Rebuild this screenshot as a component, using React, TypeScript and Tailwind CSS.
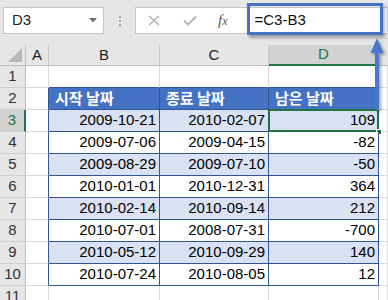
import React from "react";

const rows = [
  ["2009-10-21", "2010-02-07", "109"],
  ["2009-07-06", "2009-04-15", "-82"],
  ["2009-08-29", "2009-07-10", "-50"],
  ["2010-01-01", "2010-12-31", "364"],
  ["2010-02-14", "2010-09-14", "212"],
  ["2010-07-01", "2008-07-31", "-700"],
  ["2010-05-12", "2010-09-29", "140"],
  ["2010-07-24", "2010-08-05", "12"],
];

const font = { fontFamily: '"Liberation Sans", "Noto Sans CJK KR", sans-serif' };

function RowHead({ n, active }: { n: number; active?: boolean }) {
  return (
    <div
      className={
        "h-[22px] flex items-center justify-center border-b border-[#d0d0d0] text-[15px] " +
        (active
          ? "bg-[#d2d2d2] text-[#217346] border-r-2 border-r-[#217346]"
          : "bg-[#e6e6e6] text-[#333] border-r border-r-[#bdbdbd]")
      }
    >
      {n}
    </div>
  );
}

function Blank({ className = "" }: { className?: string }) {
  return <div className={"h-[22px] border-r border-b border-[#d9d9d9] bg-white " + className} />;
}

export default function App() {
  return (
    <div className="relative w-[388px] h-[300px] overflow-hidden bg-white" style={font}>
      {/* formula bar */}
      <div className="h-[45px] bg-[#e6e6e6] flex items-start pt-[7px]">
        <div className="ml-[3px] w-[101px] h-[27px] bg-white border border-[#c6c6c6] flex items-center pl-[8px] pr-[6px]">
          <span className="text-[15px] text-[#222] flex-1">D3</span>
          <svg width="8" height="5" viewBox="0 0 8 5">
            <path d="M0 0 L8 0 L4 4.5 Z" fill="#6f6f6f" />
          </svg>
        </div>
        <div className="w-[31px] h-[27px] flex flex-col items-center justify-center gap-[2px]">
          <span className="w-[2px] h-[2px] bg-[#a8a8a8]" />
          <span className="w-[2px] h-[2px] bg-[#a8a8a8]" />
          <span className="w-[2px] h-[2px] bg-[#a8a8a8]" />
        </div>
        <div className="flex-1 h-[27px] bg-white border border-[#c6c6c6] flex items-center">
          <svg className="ml-[12px]" width="12" height="11" viewBox="0 0 12 11">
            <path d="M1 1 L11 10 M11 1 L1 10" stroke="#b5b5b5" strokeWidth="1.6" />
          </svg>
          <svg className="ml-[23px]" width="14" height="11" viewBox="0 0 14 11">
            <path d="M1 5.5 L5 9.5 L13 1.5" stroke="#b5b5b5" strokeWidth="1.8" fill="none" />
          </svg>
          <span
            className="ml-[21px] text-[15px] italic text-[#555]"
            style={{ fontFamily: '"Liberation Serif", serif' }}
          >
            f<span className="text-[12px]">x</span>
          </span>
          <span className="ml-[27px] text-[15px] text-[#111]">=C3-B3</span>
        </div>
      </div>

      {/* highlight frame over the formula */}
      <div className="absolute left-[247px] top-[3px] w-[136px] h-[32px] border-[3px] border-[#4472c4] shadow-[2px_3px_3px_rgba(0,0,0,0.3)]" />

      {/* sheet grid */}
      <div className="grid grid-cols-[26px_23px_111px_109px_110px_1fr] text-[15px]">
        {/* column headers */}
        <div className="h-[21px] bg-[#e6e6e6] border-r border-b border-[#bdbdbd] flex items-end justify-end pr-[3px] pb-[3px]">
          <svg width="14" height="14" viewBox="0 0 14 14">
            <path d="M14 0 L14 14 L0 14 Z" fill="#b9b9b9" />
          </svg>
        </div>
        {["A", "B", "C"].map((c) => (
          <div
            key={c}
            className="h-[21px] bg-[#e6e6e6] border-r border-r-[#c6c6c6] border-b border-b-[#bdbdbd] flex items-center justify-center text-[#222]"
          >
            {c}
          </div>
        ))}
        <div className="h-[21px] bg-[#d2d2d2] border-r border-r-[#c6c6c6] border-b-2 border-b-[#217346] flex items-center justify-center text-[#217346]">
          D
        </div>
        <div className="h-[21px] bg-[#e6e6e6] border-b border-[#bdbdbd]" />

        {/* row 1 */}
        <RowHead n={1} />
        <Blank />
        <Blank className="border-b-[#2f5597]" />
        <Blank className="border-b-[#2f5597]" />
        <Blank className="border-b-[#2f5597]" />
        <Blank />

        {/* row 2: table header */}
        <RowHead n={2} />
        <Blank className="border-r-[#2f5597]" />
        {["시작 날짜", "종료 날짜", "남은 날짜"].map((h) => (
          <div
            key={h}
            className="h-[22px] bg-[#4472c4] border-r border-b border-[#2f5597] flex items-center pl-[6px] text-white font-bold"
            style={{ fontFamily: '"Noto Sans CJK KR", sans-serif' }}
          >
            {h}
          </div>
        ))}
        <Blank />

        {rows.map((r, i) => {
          const n = i + 3;
          const bg = i % 2 === 0 ? "bg-[#d9e1f2]" : "bg-white";
          return (
            <React.Fragment key={n}>
              <RowHead n={n} active={n === 3} />
              <Blank className="border-r-[#2f5597]" />
              {r.map((v, j) => (
                <div
                  key={j}
                  className={
                    "relative h-[22px] border-r border-b border-[#2f5597] flex items-center justify-end pr-[3px] text-black " +
                    bg
                  }
                >
                  {v}
                  {n === 3 && j === 2 && (
                    <>
                      <div className="absolute -left-[1px] -top-[1px] -right-[1px] -bottom-[1px] border-2 border-[#217346]" />
                      <div className="absolute -right-[4px] -bottom-[4px] w-[6px] h-[6px] bg-[#217346] border border-white" />
                    </>
                  )}
                </div>
              ))}
              <Blank />
            </React.Fragment>
          );
        })}

        {/* row 11 */}
        <RowHead n={11} />
        <Blank />
        <Blank />
        <Blank />
        <Blank />
        <Blank />
      </div>

      {/* arrow from D3 to formula */}
      <svg
        className="absolute left-[366px] top-[36px] drop-shadow-[2px_2px_1.5px_rgba(0,0,0,0.35)]"
        width="22"
        height="76"
        viewBox="366 36 22 76"
      >
        <path d="M377 38 L383.5 53 L379 53 L379 110 L375 110 L375 53 L370.5 53 Z" fill="#4a78cb" />
      </svg>
    </div>
  );
}
